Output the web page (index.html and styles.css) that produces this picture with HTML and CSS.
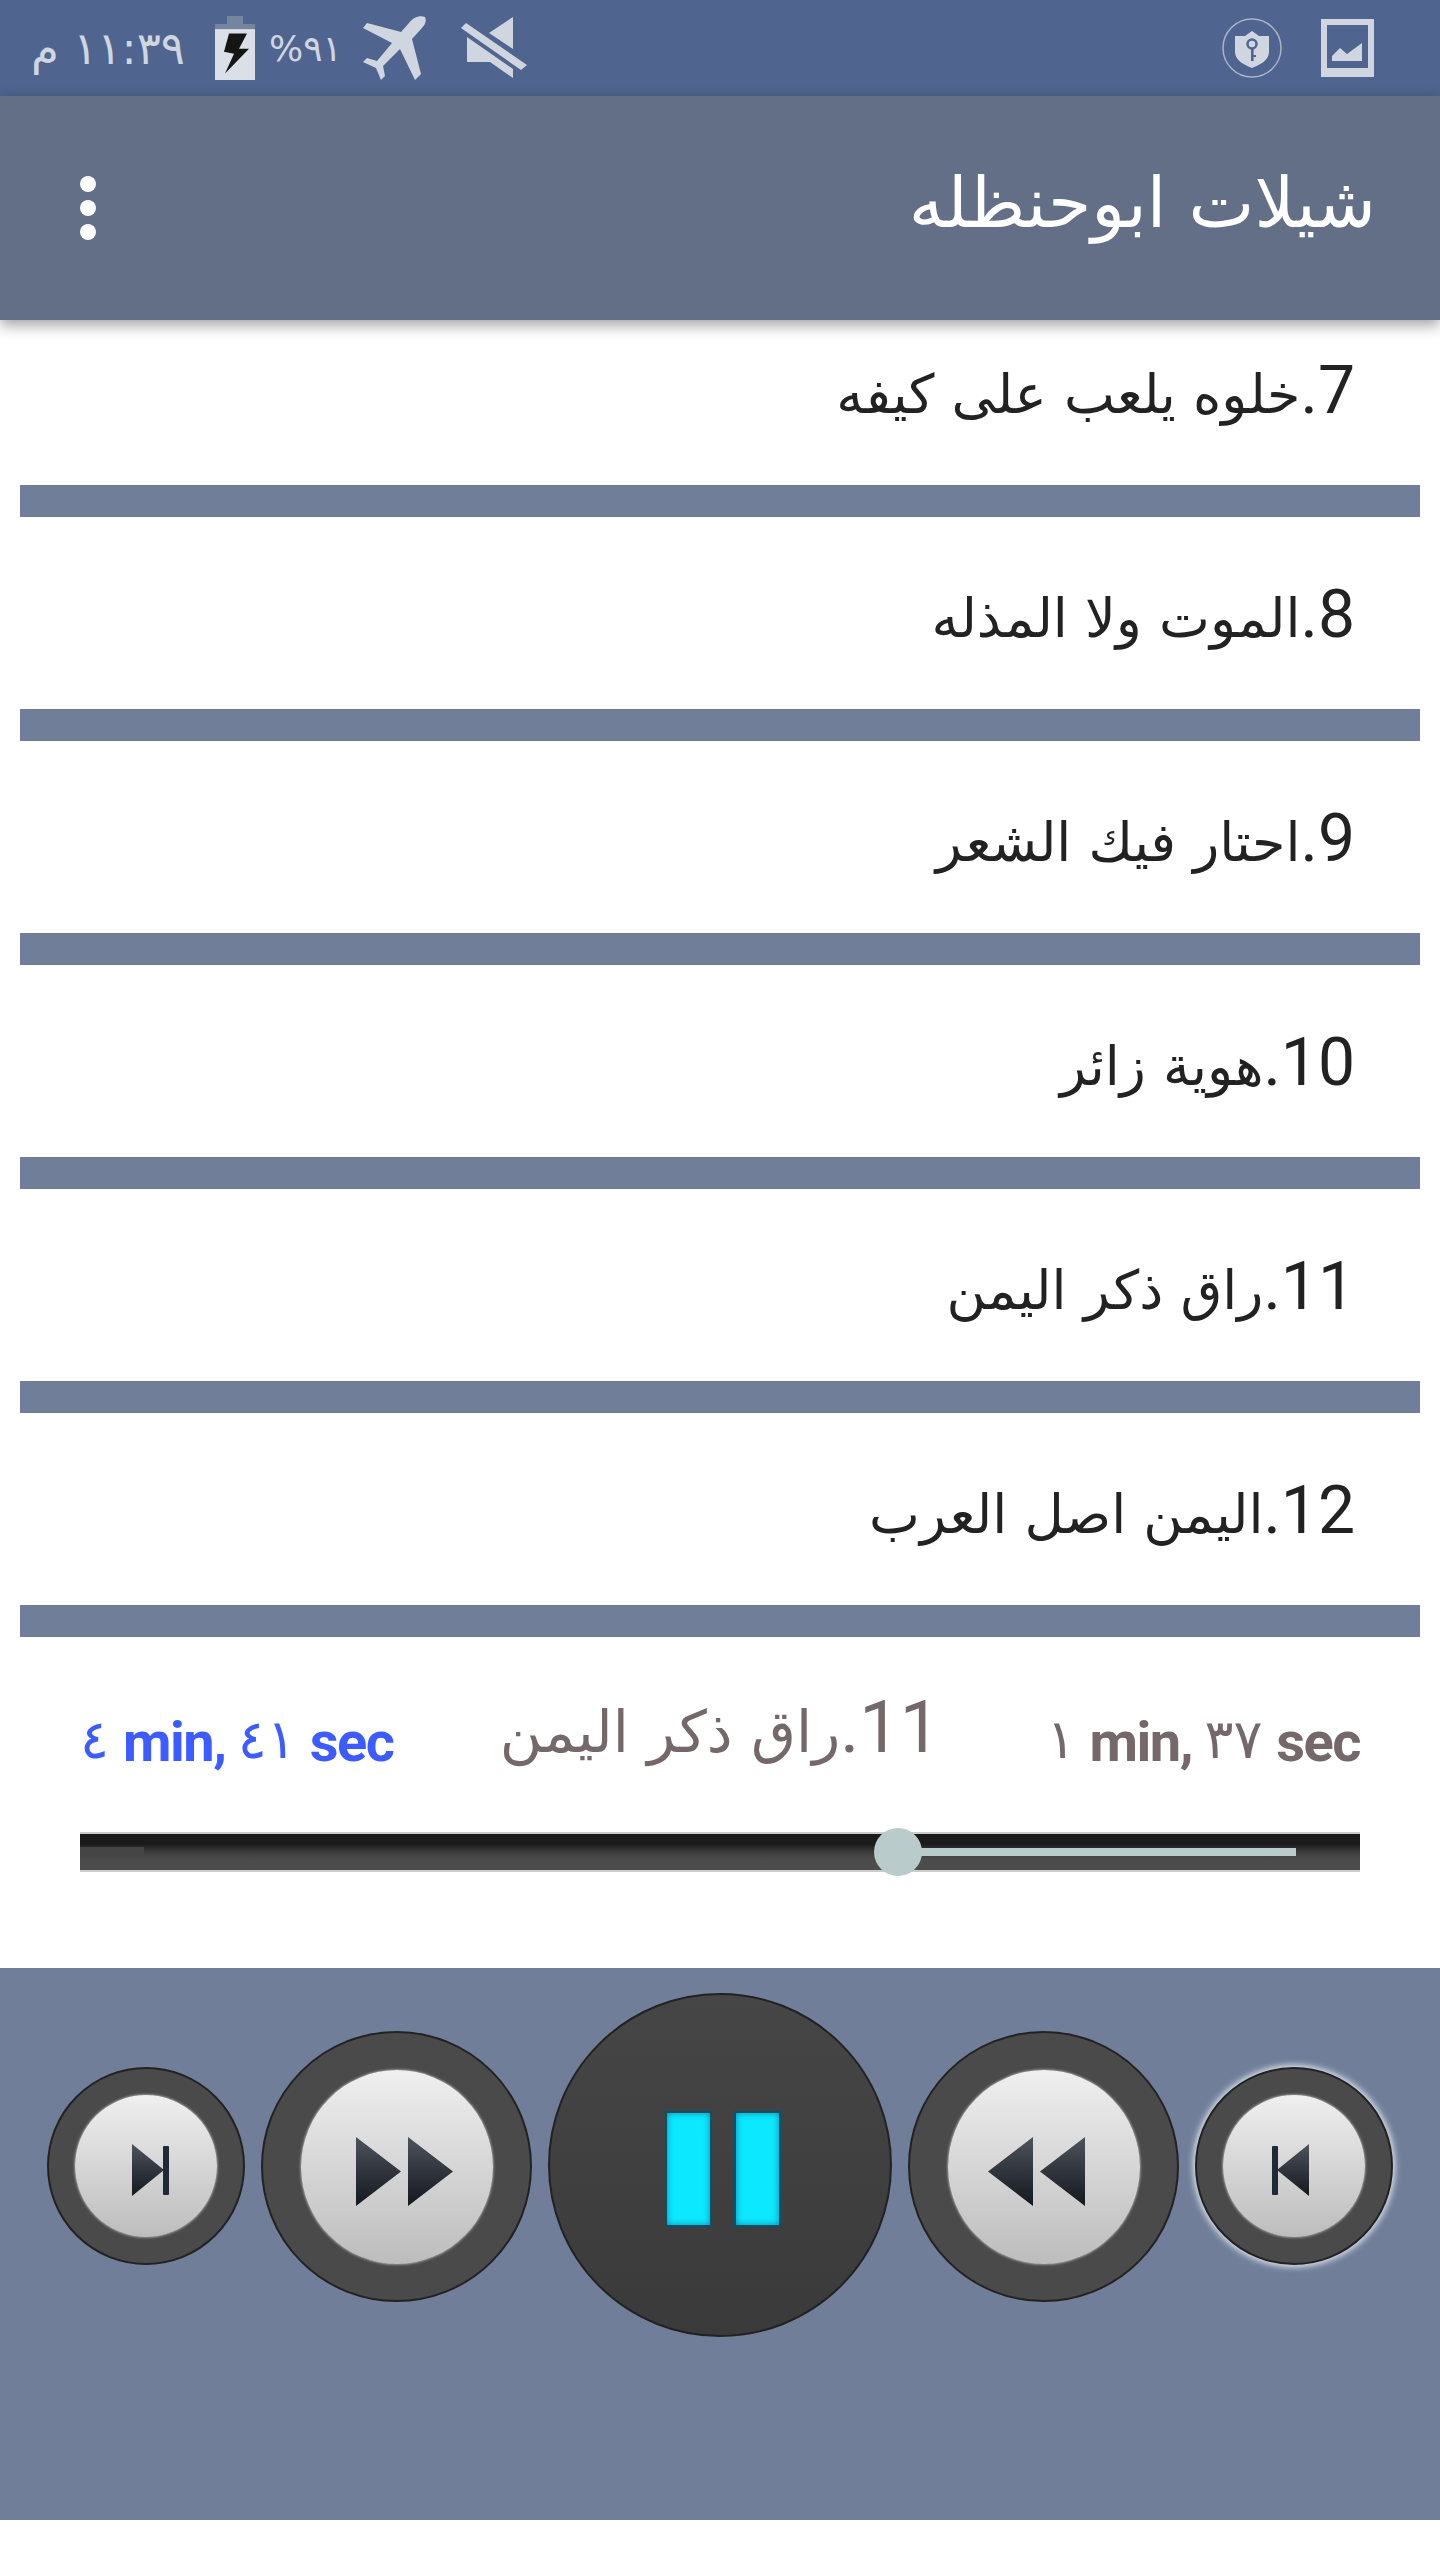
FILE: index.html
```html
<!DOCTYPE html>
<html lang="ar">

<head>
    <meta charset="UTF-8">
    <title>شيلات ابوحنظله</title>
    <link rel="stylesheet" href="styles.css">
</head>

<body>
    <!-- Status bar -->
    <div class="status-bar">
        <div class="status-group">
            <span class="status-time" dir="rtl">١١:٣٩ م</span>
            <svg class="icon-battery" viewBox="0 0 40 88" preserveAspectRatio="none">
                <rect x="12" y="0" width="16" height="12" fill="#76859f"/>
                <rect x="0" y="11" width="40" height="7" fill="#76859f"/>
                <rect x="0" y="18" width="40" height="70" fill="#dadfe8"/>
                <path d="M14 24 L32 24 L24 45 L34 45 L10 79 L19 52 L9 49 Z" fill="#151515"/>
            </svg>
            <span class="status-percent" dir="ltr">%٩١</span>
            <svg class="icon-plane" viewBox="0 0 64 64">
                <path d="M62 1 C56 -1 50 2 46 7 L38 16 L4 7 L0 12 L29 27 L14 45 L4 42 L0 46 L13 52 L18 64 L22 60 L20 50 L37 33 L52 64 L58 58 L49 23 L58 13 C62 9 64 5 62 1 Z" fill="#d0d6e0"/>
            </svg>
            <svg class="icon-mute" viewBox="0 0 66 62">
                <path d="M52 0 L52 32 L28 16 Z" fill="#d0d6e0"/>
                <path d="M6 20 L52 52 L52 61 L29 45 L6 45 Z" fill="#d0d6e0"/>
                <path d="M0 11 L5 6 L66 48 L60 53 Z" fill="#d0d6e0"/>
            </svg>
        </div>
        <div class="status-group status-right">
            <svg class="icon-shield" viewBox="0 0 60 60">
                <circle cx="30" cy="30" r="29" fill="none" stroke="#a9b3c6" stroke-width="1.5"/>
                <path d="M30 13 L37 18 L47 18 L47 34 C47 42 38 47 30 50 C22 47 13 42 13 34 L13 18 L23 18 Z" fill="#d0d6e0"/>
                <circle cx="30" cy="26" r="4.5" fill="none" stroke="#4f658f" stroke-width="2.5"/>
                <path d="M29 30 h2.6 v13 h-2.6 z M31 37 h3 v2 h-3 z" fill="#4f658f"/>
            </svg>
            <svg class="icon-picture" viewBox="0 0 53 58">
                <path d="M0 0 H53 V58 H0 Z M6 6 V49 H47 V6 Z" fill="#d0d6e0" fill-rule="evenodd"/>
                <path d="M11 42 L11 37 L19 29 L26 35 L41 24 L41 42 Z" fill="#d0d6e0"/>
            </svg>
        </div>
    </div>

    <!-- App bar -->
    <div class="app-bar">
        <div class="overflow-menu">
            <span class="dot"></span>
            <span class="dot"></span>
            <span class="dot"></span>
        </div>
        <h1 class="app-title">شيلات ابوحنظله</h1>
    </div>

    <!-- Track list, scrolled a little past the top -->
    <div class="track-list">
        <div class="track track-first"><span class="track-num">7.</span>خلوه يلعب على كيفه</div>
        <div class="track"><span class="track-num">8.</span>الموت ولا المذله</div>
        <div class="track"><span class="track-num">9.</span>احتار فيك الشعر</div>
        <div class="track"><span class="track-num">10.</span>هوية زائر</div>
        <div class="track"><span class="track-num">11.</span>راق ذكر اليمن</div>
        <div class="track"><span class="track-num">12.</span>اليمن اصل العرب</div>
    </div>

    <!-- Now playing -->
    <div class="now-playing">
        <div class="time-row">
            <span class="time time-total" dir="ltr"><span class="digit">٤</span> min, <span class="digit">٤١</span> sec</span>
            <span class="current-title"><span class="current-num">11.</span>راق ذكر اليمن</span>
            <span class="time" dir="ltr"><span class="digit">١</span> min, <span class="digit">٣٧</span> sec</span>
        </div>
        <div class="seek-bar">
            <div class="seek-start"></div>
            <div class="seek-thumb"></div>
            <div class="seek-line"></div>
        </div>
    </div>

    <!-- Player controls -->
    <div class="controls">
        <div class="btn btn-small">
            <div class="btn-face">
                <svg class="glyph-small glyph-next" viewBox="0 0 37 52">
                    <defs>
                        <linearGradient id="g1" x1="0" y1="0" x2="0" y2="1">
                            <stop offset="0" stop-color="#4d535c"/>
                            <stop offset="1" stop-color="#14181f"/>
                        </linearGradient>
                    </defs>
                    <path d="M0 0 L32 26 L0 52 Z" fill="url(#g1)"/>
                    <rect x="31" y="2" width="6" height="49" rx="1" fill="#1f2a36"/>
                </svg>
            </div>
        </div>
        <div class="btn btn-medium">
            <div class="btn-face">
                <svg class="glyph-medium glyph-fwd" viewBox="0 0 97 69">
                    <path d="M0 0 L45 34.5 L0 69 Z M52 0 L97 34.5 L52 69 Z" fill="url(#g1)"/>
                </svg>
            </div>
        </div>
        <div class="btn-pause">
            <span class="pause-bar"></span>
            <span class="pause-bar"></span>
        </div>
        <div class="btn btn-medium">
            <div class="btn-face">
                <svg class="glyph-medium glyph-back" viewBox="0 0 97 69">
                    <path d="M97 0 L52 34.5 L97 69 Z M45 0 L0 34.5 L45 69 Z" fill="url(#g1)"/>
                </svg>
            </div>
        </div>
        <div class="btn btn-small btn-focused">
            <div class="btn-face">
                <svg class="glyph-small glyph-prev" viewBox="0 0 37 52">
                    <path d="M37 0 L5 26 L37 52 Z" fill="url(#g1)"/>
                    <rect x="0" y="2" width="6" height="49" rx="1" fill="#1f2a36"/>
                </svg>
            </div>
        </div>
    </div>
</body>

</html>
```

FILE: styles.css
```css
* {
    box-sizing: border-box;
}

body {
    margin: 0;
    width: 1440px;
    height: 2560px;
    background-color: #fff;
    font-family: "DejaVu Sans", sans-serif;
    overflow: hidden;
}

/* Status bar */
.status-bar {
    height: 96px;
    background-color: #4f658f;
    display: flex;
    justify-content: space-between;
    align-items: center;
    padding: 0 66px 0 30px;
    color: #d0d6e0;
}

.status-group {
    display: flex;
    align-items: center;
}

.status-right {
    gap: 39px;
}

.status-time {
    font-size: 45px;
    width: 155px;
    white-space: nowrap;
}

.status-percent {
    font-size: 36px;
    margin-left: 14px;
    width: 70px;
}

.icon-battery {
    width: 40px;
    height: 64px;
    margin-left: 30px;
}

.icon-plane {
    width: 64px;
    height: 64px;
    margin-left: 24px;
}

.icon-mute {
    width: 66px;
    height: 62px;
    margin-left: 34px;
}

.icon-shield {
    width: 60px;
    height: 60px;
}

.icon-picture {
    width: 53px;
    height: 58px;
}

/* App bar */
.app-bar {
    height: 224px;
    background-color: #636f87;
    display: flex;
    justify-content: space-between;
    align-items: center;
    padding: 0 64px 0 80px;
    box-shadow: 0 5px 14px rgba(0, 0, 0, 0.38);
    position: relative;
}

.overflow-menu {
    display: flex;
    flex-direction: column;
    gap: 8px;
}

.dot {
    width: 16px;
    height: 16px;
    border-radius: 50%;
    background-color: #fff;
}

.app-title {
    margin: 0 0 10px;
    font-size: 70px;
    font-weight: normal;
    color: #fff;
    direction: rtl;
}

/* Track list */
.track-list {
    height: 1317px;
    padding: 0 20px;
    overflow: hidden;
}

.track {
    height: 224px;
    padding-right: 65px;
    line-height: 196px;
    direction: rtl;
    font-size: 54px;
    color: #222;
    border-bottom: 32px solid #707e99;
}

.track-first {
    margin-top: -27px;
}

.track-num {
    font-family: Roboto, sans-serif;
    font-size: 66px;
}

/* Now playing */
.now-playing {
    height: 331px;
    padding: 54px 80px 0;
}

.time-row {
    display: flex;
    justify-content: space-between;
    align-items: center;
    height: 90px;
}

.time {
    font-family: Roboto, "DejaVu Sans", sans-serif;
    font-weight: bold;
    font-size: 56px;
    letter-spacing: -1.5px;
    color: #75686b;
    margin-top: 10px;
}

.time-total {
    color: #3d5cff;
}

.digit {
    font-family: "DejaVu Sans", sans-serif;
    font-weight: normal;
    font-size: 54px;
    vertical-align: 3px;
}

.current-title {
    font-size: 58px;
    color: #75686b;
    direction: rtl;
    margin-bottom: 18px;
}

.current-num {
    font-family: Roboto, sans-serif;
    font-size: 72px;
}

.seek-bar {
    position: relative;
    margin-top: 51px;
    height: 40px;
    background: linear-gradient(#1b1b1b 0, #1b1b1b 28%, #3c3c3c 50%, #4c4c4c 72%, #4c4c4c 100%);
    border-top: 2px solid #ccc;
    border-bottom: 2px solid #ccc;
}

.seek-start {
    position: absolute;
    left: 0;
    top: 13px;
    width: 64px;
    height: 9px;
    background-color: #454545;
}

.seek-thumb {
    position: absolute;
    left: 794px;
    top: -6px;
    width: 48px;
    height: 48px;
    border-radius: 50%;
    background-color: #b9cbca;
}

.seek-line {
    position: absolute;
    left: 838px;
    right: 64px;
    top: 14px;
    height: 8px;
    background-color: #b9cbca;
}

/* Player controls */
.controls {
    height: 552px;
    background-color: #707e99;
    display: flex;
    align-items: flex-start;
    justify-content: center;
    gap: 16px;
    padding-top: 25px;
}

.btn {
    border-radius: 50%;
    background-color: #4a4a4a;
    border: 2px solid #222;
    display: flex;
    align-items: center;
    justify-content: center;
    flex-shrink: 0;
}

.btn-small {
    width: 198px;
    height: 198px;
    margin-top: 74px;
}

.btn-medium {
    width: 271px;
    height: 271px;
    margin-top: 38px;
}

.btn-face {
    border-radius: 50%;
    background: linear-gradient(#efefef, #bdbdbd);
    box-shadow: 0 0 3px #ddd;
    display: flex;
    align-items: center;
    justify-content: center;
}

.btn-small .btn-face {
    width: 142px;
    height: 142px;
}

.btn-medium .btn-face {
    width: 192px;
    height: 194px;
}

.glyph-small {
    width: 37px;
    height: 52px;
}

.glyph-medium {
    width: 97px;
    height: 69px;
}

/* the glyphs sit a bit off centre in the reference buttons */
.glyph-next {
    margin: 8px 0 0 8px;
}

.glyph-prev {
    margin: 8px 8px 0 0;
}

.glyph-fwd {
    margin: 10px 0 0 16px;
}

.glyph-back {
    margin: 10px 14px 0 0;
}

.btn-focused {
    box-shadow: 0 0 6px 2px #dfe6ee;
}

.btn-pause {
    width: 344px;
    height: 344px;
    border-radius: 50%;
    background: linear-gradient(#464646, #3a3a3a);
    border: 2px solid #222;
    display: flex;
    align-items: center;
    justify-content: center;
    gap: 22px;
    padding: 8px 0 0 6px;
    flex-shrink: 0;
}

.pause-bar {
    width: 47px;
    height: 116px;
    background-color: #0ce8ff;
    border: 2px solid #0e4f66;
    box-shadow: inset 0 0 6px #0a86a6;
}
```
